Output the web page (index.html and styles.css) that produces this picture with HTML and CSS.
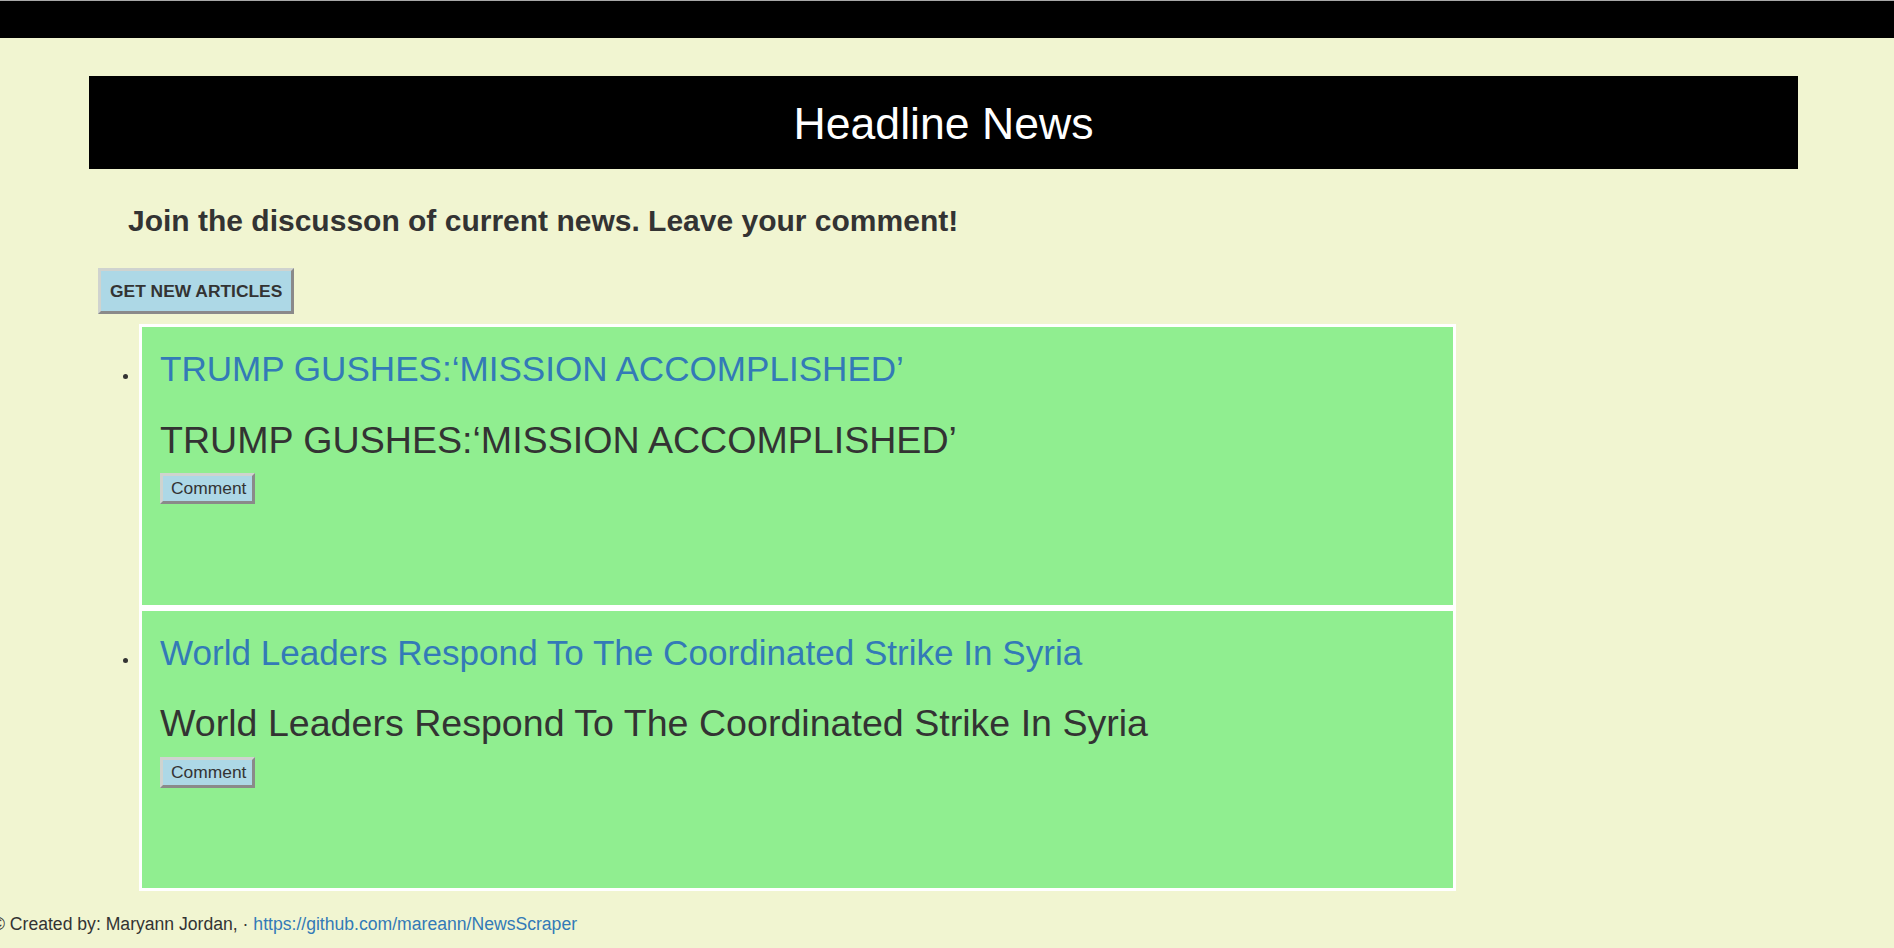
FILE: index.html
```html
<!DOCTYPE html>
<html lang="en">
<head>
<meta charset="utf-8">
<title>Headline News</title>
<link rel="stylesheet" href="styles.css">
</head>
<body>
<nav class="topbar"></nav>
<main class="page">
  <header class="jumbo">
    <h1 class="jumbo-title">Headline News</h1>
  </header>
  <h3 class="intro">Join the discusson of current news. Leave your comment!</h3>
  <button class="btn-get">GET NEW ARTICLES</button>
  <ul class="articles">
    <li class="card">
      <a class="card-link" href="#">TRUMP GUSHES:‘MISSION ACCOMPLISHED’</a>
      <p class="card-summary">TRUMP GUSHES:‘MISSION ACCOMPLISHED’</p>
      <button class="btn-comment">Comment</button>
    </li>
    <li class="card">
      <a class="card-link" href="#">World Leaders Respond To The Coordinated Strike In Syria</a>
      <p class="card-summary">World Leaders Respond To The Coordinated Strike In Syria</p>
      <button class="btn-comment">Comment</button>
    </li>
  </ul>
</main>
<footer class="footer">© Created by: Maryann Jordan, · <a class="footer-link" href="#">https://github.com/mareann/NewsScraper</a></footer>
</body>
</html>
```
FILE: styles.css
```css
html, body {
  margin: 0;
  padding: 0;
}
body {
  background: #f1f5d1;
  color: #333;
  font-family: "Liberation Sans", Arial, Helvetica, sans-serif;
  font-size: 17px;
}
.topbar {
  display: block;
  height: 37px;
  background: #000;
  border-top: 1px solid #a8a8a8;
}
.page {
  margin-left: 89px;
  width: 1709px;
}
.jumbo {
  margin-top: 38px;
  height: 93px;
  box-sizing: border-box;
  padding-top: 24px;
  background: #000;
}
.jumbo-title {
  margin: 0;
  text-align: center;
  color: #fff;
  font-weight: normal;
  font-size: 44.6px;
  line-height: 47px;
}
.intro {
  margin: 34px 0 0 39px;
  font-size: 30px;
  line-height: 36px;
  font-weight: bold;
  color: #333;
}
.btn-get {
  display: block;
  margin: 29px 0 0 9px;
  padding: 10px 9px 10px 9px;
  background: #add8e6;
  color: #333;
  font-family: inherit;
  font-weight: bold;
  font-size: 17.4px;
  line-height: 20px;
  border-style: solid;
  border-width: 3px;
  border-color: #cfd3cf #8a8a8a #8a8a8a #cfd3cf;
  border-radius: 0;
}
.articles {
  margin: 10px 0 0 0;
  padding: 0 0 0 50px;
  list-style: disc outside;
}
.card {
  box-sizing: border-box;
  width: 1317px;
  height: 283.5px;
  border: 3px solid #fff;
  background: #90ee90;
  padding: 22px 18px 0 18px;
  font-size: 15px;
}
.card-link {
  display: block;
  color: #337ab7;
  text-decoration: none;
  font-size: 35.1px;
  line-height: 40px;
}
.card-summary {
  margin: 28.5px 0 0 0;
  font-size: 37.6px;
  line-height: 44px;
  color: #333;
}
.btn-comment {
  display: block;
  margin-top: 11.5px;
  padding: 2px 6px 2px 8px;
  background: #add8e6;
  color: #333;
  font-family: inherit;
  font-size: 17.4px;
  line-height: 21px;
  border-style: solid;
  border-width: 3px;
  border-color: #cfd3cf #8a8a8a #8a8a8a #cfd3cf;
  border-radius: 0;
}
.footer {
  margin: 23px 0 0 -8px;
  font-size: 17.6px;
  line-height: 20px;
  color: #333;
  white-space: nowrap;
}
.footer-link {
  color: #337ab7;
  text-decoration: none;
}
```
